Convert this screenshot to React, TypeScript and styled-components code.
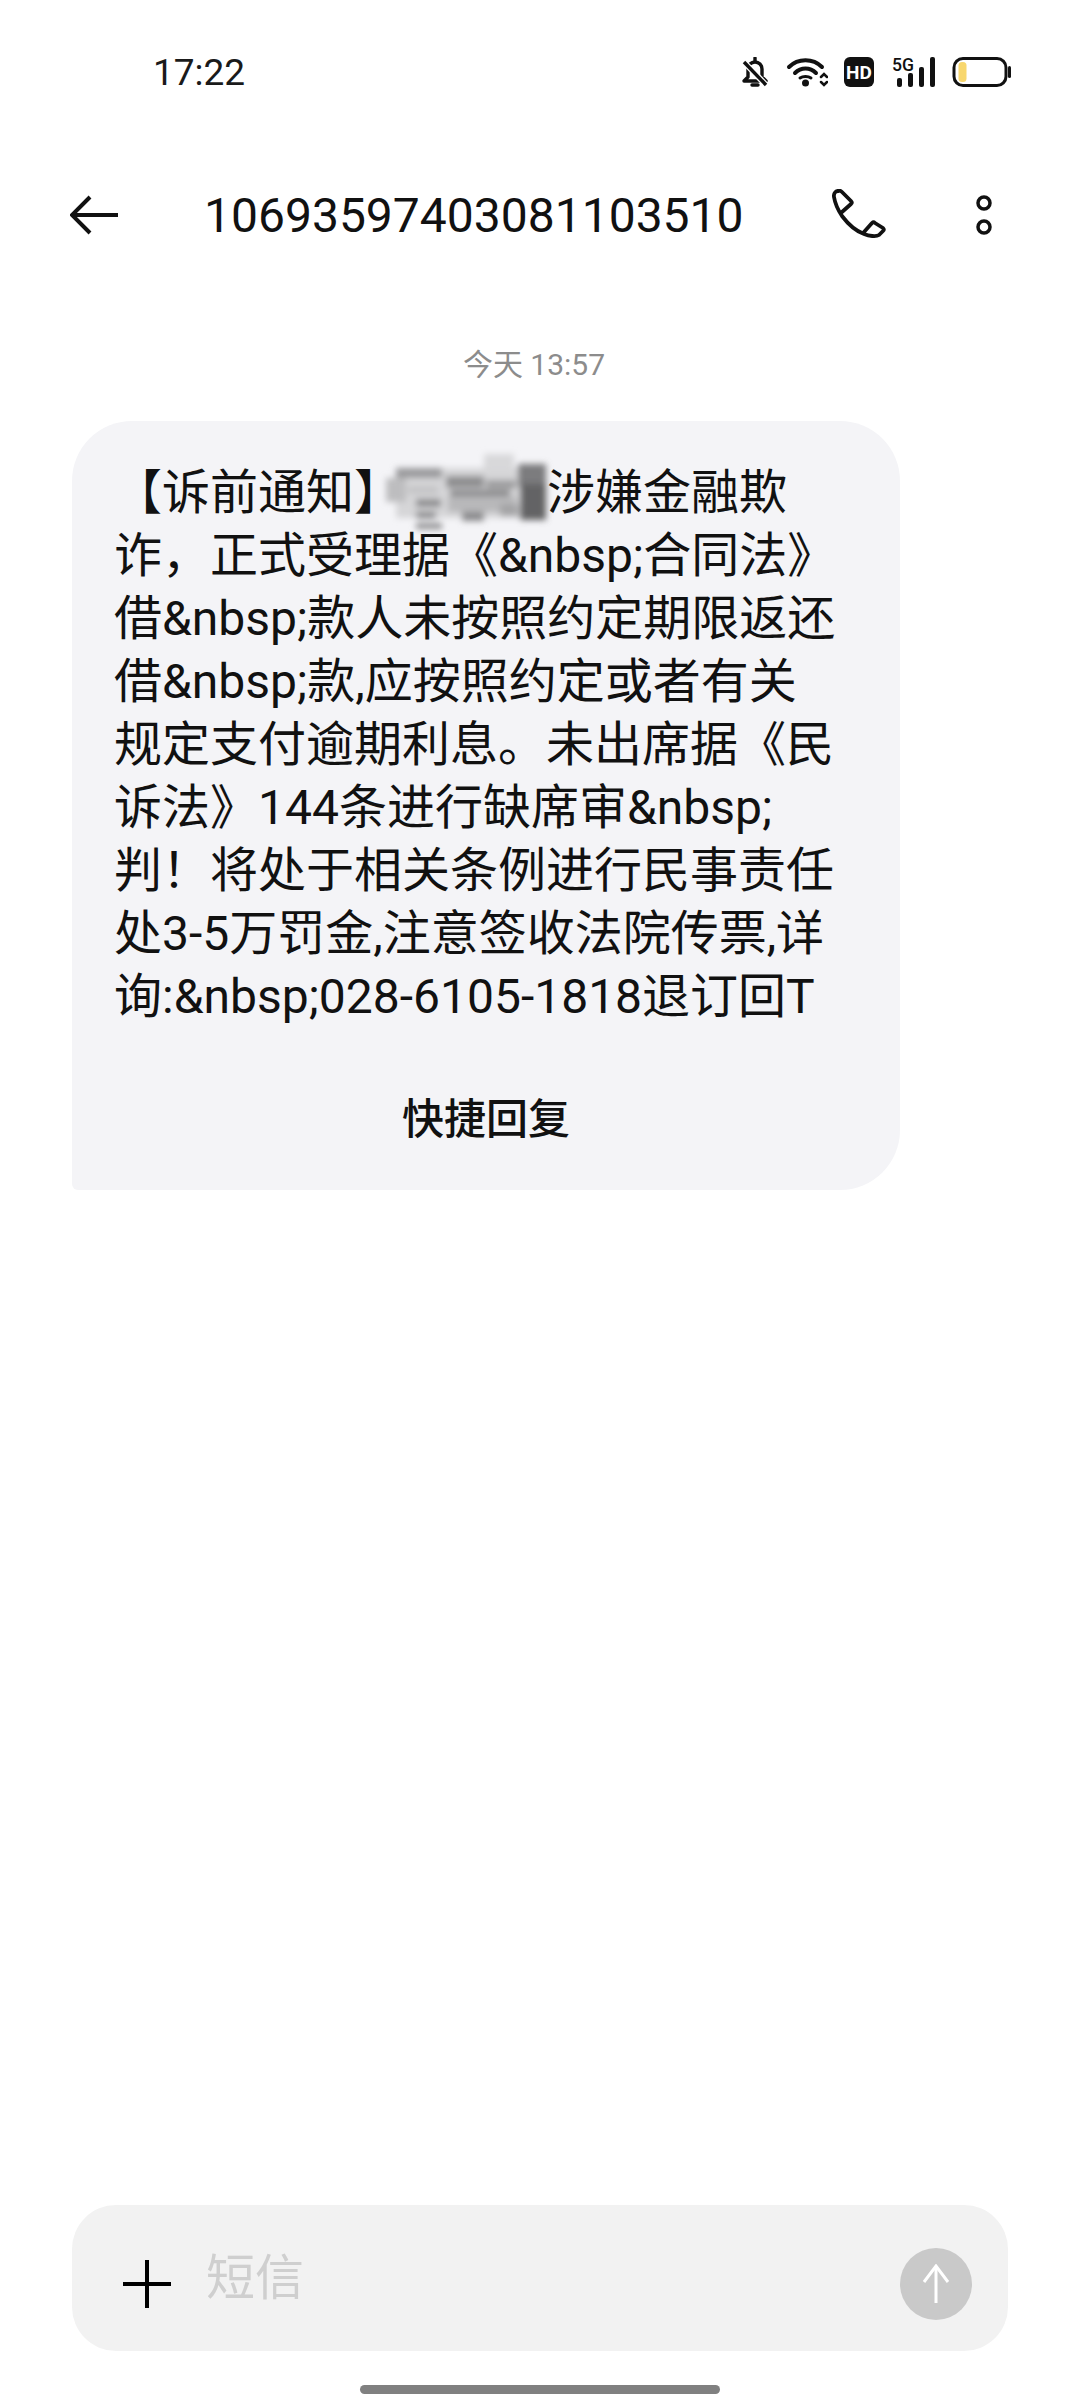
import styled, { createGlobalStyle } from 'styled-components';

const GlobalStyle = createGlobalStyle`
  html, body {
    margin: 0;
    padding: 0;
    background: #ffffff;
  }
  body {
    font-family: Roboto, "Noto Sans CJK SC", sans-serif;
    color: #111111;
  }
`;

const Page = styled.div`
  width: 1080px;
  height: 2400px;
  display: flex;
  flex-direction: column;
  overflow: hidden;
  background: #ffffff;
`;

const StatusBar = styled.div`
  height: 72px;
  padding: 36px 68px 0 153px;
  display: flex;
  align-items: center;
  justify-content: space-between;
`;

const Clock = styled.span`
  font-size: 37px;
  color: #1a1a1a;
`;

const StatusIcons = styled.div`
  display: flex;
  align-items: center;
  gap: 16px;
`;

const Header = styled.header`
  height: 100px;
  margin-top: 57px;
  padding: 0 88px 0 70px;
  display: flex;
  align-items: center;
`;

const Title = styled.h1`
  margin: 0 0 0 86px;
  flex: 1;
  font-size: 48px;
  font-weight: 400;
  color: #111111;
`;

const HeaderActions = styled.div`
  display: flex;
  align-items: center;
  gap: 90px;
`;

const Thread = styled.main`
  flex: 1;
  padding: 0 72px;
  display: flex;
  flex-direction: column;
`;

const DateLabel = styled.div`
  margin-top: 78px;
  height: 44px;
  line-height: 44px;
  text-align: center;
  font-size: 30px;
  color: #8c8c8c;
  transform: translateX(-6px);
`;

const Bubble = styled.div`
  margin-top: 34px;
  width: 828px;
  height: 769px;
  box-sizing: border-box;
  padding: 40px 42px 0;
  background: #f4f4f7;
  border-radius: 60px 60px 60px 6px;
`;

const Line = styled.div`
  height: 63px;
  line-height: 63px;
  font-size: 48px;
  white-space: nowrap;
  color: #111111;
`;

const Redacted = styled.span`
  display: inline-block;
  position: relative;
  width: 145px;
  height: 48px;
  vertical-align: middle;
`;

const Smear = styled.svg`
  position: absolute;
  left: -22px;
  top: -28px;
`;

const QuickReply = styled.div`
  margin-top: 62px;
  height: 60px;
  line-height: 60px;
  text-align: center;
  font-size: 42px;
  font-weight: 500;
  color: #111111;
`;

const Composer = styled.div`
  margin: 0 72px;
  height: 146px;
  box-sizing: border-box;
  padding: 12px 36px 0 50px;
  display: flex;
  align-items: center;
  background: #f2f2f2;
  border-radius: 44px;
`;

const Placeholder = styled.span`
  flex: 1;
  margin-left: 34px;
  font-size: 49px;
  line-height: 60px;
  color: #cfcfcf;
  transform: translateY(-5px);
`;

const SendButton = styled.div`
  width: 72px;
  height: 72px;
  border-radius: 50%;
  background: #c9c9c9;
  display: flex;
  align-items: center;
  justify-content: center;
`;

const HomeBar = styled.div`
  width: 360px;
  height: 9px;
  margin: 34px auto 6px;
  border-radius: 5px;
  background: #808080;
`;

const messageTail = [
  '诈，正式受理据《&nbsp;合同法》',
  '借&nbsp;款人未按照约定期限返还',
  '借&nbsp;款,应按照约定或者有关',
  '规定支付逾期利息。未出席据《民',
  '诉法》144条进行缺席审&nbsp;',
  '判！将处于相关条例进行民事责任',
  '处3-5万罚金,注意签收法院传票,详',
  '询:&nbsp;028-6105-1818退订回T',
];

// x, y, width, height, fill of the mosaic patches under the blur
const smearPatches: [number, number, number, number, string][] = [
  [16, 24, 150, 50, '#d6d6d8'],
  [6, 34, 20, 24, '#bdbdbf'],
  [104, 10, 30, 16, '#d8d8da'],
  [68, 52, 68, 16, '#b8b8ba'],
  [16, 24, 46, 10, '#9a9a9c'],
  [28, 42, 30, 8, '#c4c4c6'],
  [66, 32, 38, 12, '#8e8e90'],
  [106, 36, 30, 9, '#9c9c9e'],
  [70, 46, 60, 6, '#858587'],
  [138, 20, 28, 22, '#7c7c7e'],
  [140, 40, 26, 36, '#636365'],
  [120, 60, 18, 12, '#a4a4a6'],
  [36, 55, 25, 8, '#8a8a8c'],
  [36, 68, 20, 6, '#7c7c7e'],
  [36, 79, 26, 6, '#8e8e90'],
  [82, 68, 22, 9, '#8a8a8c'],
];

const App = () => {
  return (
    <Page>
      <GlobalStyle />
      <StatusBar>
        <Clock>17:22</Clock>
        <StatusIcons>
          <svg width="28" height="30" viewBox="0 0 28 30" fill="none" stroke="#111" strokeWidth="3.4">
            <path d="M6 20V12c0-4 3-7 7-7s7 3 7 7v8l4 4H2z" strokeLinejoin="round" />
            <path d="M13 1v3M10 28h6" strokeLinecap="round" />
            <path d="M2 5l22 23" stroke="#fff" strokeWidth="6" />
            <path d="M2 5l22 23" />
          </svg>
          <svg width="42" height="30" viewBox="0 0 42 30" fill="none" stroke="#111" strokeWidth="4" strokeLinecap="round">
            <path d="M3 10C12 1 27 1 36 10" />
            <path d="M9 16c6-6 15-6 21 0" />
            <path d="M14 21c3-2 8-2 11 0" strokeWidth="3" />
            <circle cx="19.5" cy="26" r="3.5" fill="#111" stroke="none" />
            <path d="M35 20l3-3 3 3M35 25l3 3 3-3" strokeWidth="2.5" />
          </svg>
          <svg width="30" height="30" viewBox="0 0 30 30">
            <rect width="30" height="30" rx="6" fill="#111" />
            <text x="15" y="22" fontSize="19" fontWeight="700" fontFamily="Roboto" fill="#fff" textAnchor="middle">HD</text>
          </svg>
          <svg width="46" height="30" viewBox="0 0 46 30" fill="#111" overflow="visible">
            <text x="2" y="14" fontSize="18" fontWeight="500" fontFamily="Roboto" textLength="22" lengthAdjust="spacingAndGlyphs">5G</text>
            <rect x="7" y="21" width="5" height="9" rx="2" />
            <rect x="18" y="16" width="5" height="14" rx="2" />
            <rect x="29" y="10" width="5" height="20" rx="2" />
            <rect x="40" y="0" width="5" height="30" rx="2" />
          </svg>
          <svg width="60" height="30" viewBox="0 0 60 30" fill="none">
            <rect x="2" y="1.5" width="52" height="27" rx="9" stroke="#111" strokeWidth="3" />
            <rect x="6.5" y="5" width="8" height="20" rx="3.5" fill="#f8d76e" />
            <rect x="56" y="9" width="3" height="12" rx="1.5" fill="#111" />
          </svg>
        </StatusIcons>
      </StatusBar>

      <Header>
        <svg width="48" height="40" viewBox="0 0 48 40" fill="none" stroke="#111" strokeWidth="4">
          <path d="M20 2L2 20l18 18" />
          <path d="M2 20h46" />
        </svg>
        <Title>10693597403081103510</Title>
        <HeaderActions>
          <svg width="54" height="52" viewBox="0 0 54 52" fill="none" stroke="#111" strokeWidth="3.8" strokeLinejoin="round" strokeLinecap="round">
            <path d="M6 2C3 2 1.5 5 2 8c1 6 4 13 8 19 6 8 14 15 22 18 5 2 12 3 15 1l4-4c1-1 1-2 0-3L43 34c-1-1-2-1-3 0l-8 9" />
            <path d="M6 2c2-1 3 0 4 1l9 9c1 1 1 2 0 3l-9 8" />
          </svg>
          <svg width="16" height="40" viewBox="0 0 16 40" fill="none" stroke="#111" strokeWidth="3.5">
            <circle cx="8" cy="8" r="6" />
            <circle cx="8" cy="32" r="6" />
          </svg>
        </HeaderActions>
      </Header>

      <Thread>
        <DateLabel>今天 13:57</DateLabel>
        <Bubble>
          <Line>
            【诉前通知】
            <Redacted>
              <Smear width="190" height="100" viewBox="0 0 190 100">
                <filter id="smear-blur" x="-10%" y="-10%" width="120%" height="120%">
                  <feGaussianBlur stdDeviation="3.2" />
                </filter>
                <g filter="url(#smear-blur)">
                  {smearPatches.map(([x, y, w, h, fill]) => (
                    <rect key={`${x}-${y}`} x={x} y={y} width={w} height={h} fill={fill} />
                  ))}
                </g>
              </Smear>
            </Redacted>
            涉嫌金融欺
          </Line>
          {messageTail.map((text) => (
            <Line key={text}>{text}</Line>
          ))}
          <QuickReply>快捷回复</QuickReply>
        </Bubble>
      </Thread>

      <Composer>
        <svg width="50" height="50" viewBox="0 0 50 50" fill="none" stroke="#000" strokeWidth="4">
          <path d="M25 1v48" />
          <path d="M1 25h48" />
        </svg>
        <Placeholder>短信</Placeholder>
        <SendButton>
          <svg width="30" height="40" viewBox="0 0 30 40" fill="none" stroke="#fff" strokeWidth="3">
            <path d="M15 39V2" />
            <path d="M3 18L15 2l12 16" />
          </svg>
        </SendButton>
      </Composer>
      <HomeBar />
    </Page>
  );
};

export default App;
